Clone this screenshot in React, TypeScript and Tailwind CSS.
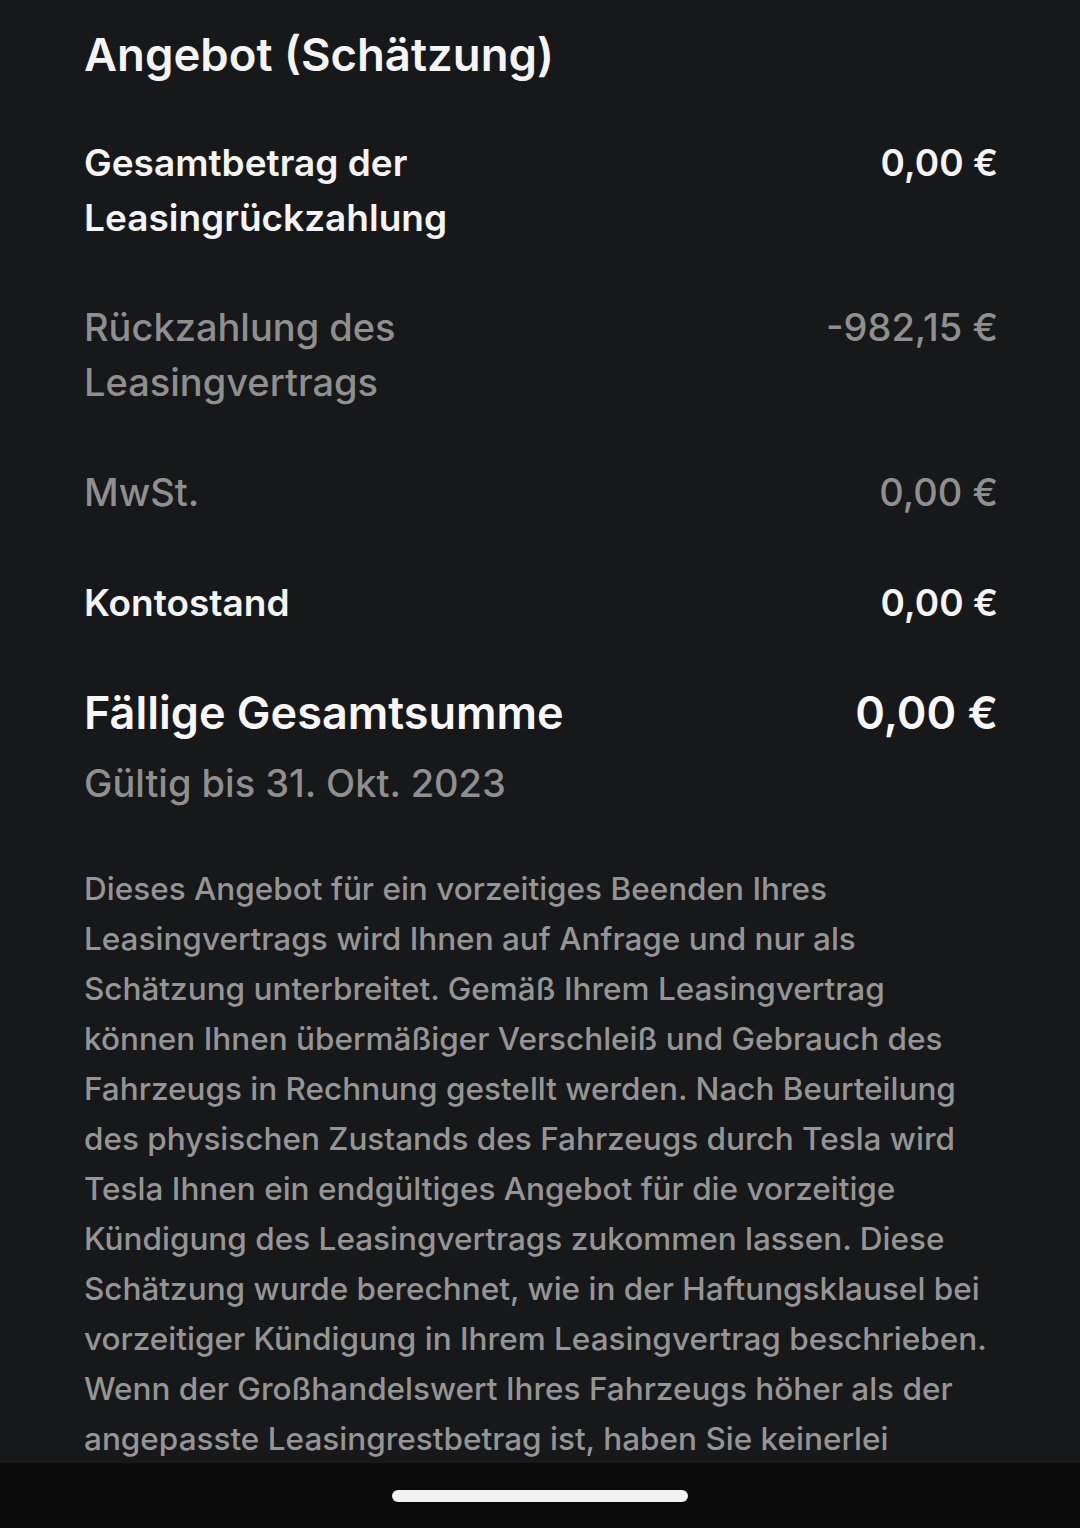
import React from "react";

const rows: { label: string[]; value: string; muted: boolean }[] = [
  { label: ["Gesamtbetrag der", "Leasingrückzahlung"], value: "0,00 €", muted: false },
  { label: ["Rückzahlung des", "Leasingvertrags"], value: "-982,15 €", muted: true },
  { label: ["MwSt."], value: "0,00 €", muted: true },
  { label: ["Kontostand"], value: "0,00 €", muted: false },
];

const para = [
  "Dieses Angebot für ein vorzeitiges Beenden Ihres",
  "Leasingvertrags wird Ihnen auf Anfrage und nur als",
  "Schätzung unterbreitet. Gemäß Ihrem Leasingvertrag",
  "können Ihnen übermäßiger Verschleiß und Gebrauch des",
  "Fahrzeugs in Rechnung gestellt werden. Nach Beurteilung",
  "des physischen Zustands des Fahrzeugs durch Tesla wird",
  "Tesla Ihnen ein endgültiges Angebot für die vorzeitige",
  "Kündigung des Leasingvertrags zukommen lassen. Diese",
  "Schätzung wurde berechnet, wie in der Haftungsklausel bei",
  "vorzeitiger Kündigung in Ihrem Leasingvertrag beschrieben.",
  "Wenn der Großhandelswert Ihres Fahrzeugs höher als der",
  "angepasste Leasingrestbetrag ist, haben Sie keinerlei",
];

export default function App() {
  return (
    <div
      className="h-[1528px] w-full flex flex-col bg-[#17181a]"
      style={{ fontFamily: "Inter, 'Noto Sans', sans-serif" }}
    >
      <div className="flex-1 overflow-hidden pl-[84px] pr-[82px] pt-[25px]">
        <h1 className="text-[45.5px] leading-[60px] font-semibold text-[#f4f4f4]">
          Angebot (Schätzung)
        </h1>
        <div className="mt-[50px] flex flex-col gap-[55px]">
          {rows.map((r, i) => (
            <div
              key={i}
              className={`flex justify-between leading-[55px] ${
                r.muted ? "text-[38px] text-[#8f8f8f] font-medium" : "text-[37px] text-[#f4f4f4] font-semibold"
              }`}
            >
              <div>
                {r.label.map((l, j) => (
                  <div key={j}>{l}</div>
                ))}
              </div>
              <div>{r.value}</div>
            </div>
          ))}
        </div>
        <div className="mt-[53px] flex justify-between text-[45px] leading-[60px] font-semibold text-[#f7f7f7]">
          <div>Fällige Gesamtsumme</div>
          <div>0,00 €</div>
        </div>
        <div className="mt-[15px] text-[38px] leading-[50px] font-medium text-[#8f8f8f]">
          Gültig bis 31. Okt. 2023
        </div>
        <p className="mt-[56px] text-[31.5px] leading-[50px] font-medium text-[#959595] whitespace-nowrap">
          {para.map((l, i) => (
            <span key={i} className="block">
              {l}
            </span>
          ))}
        </p>
      </div>
      <div className="h-[65px] shrink-0 bg-[#0b0b0b] flex justify-center pt-[27px]">
        <div className="w-[296px] h-[12px] rounded-full bg-[#f2f2f2]" />
      </div>
    </div>
  );
}
